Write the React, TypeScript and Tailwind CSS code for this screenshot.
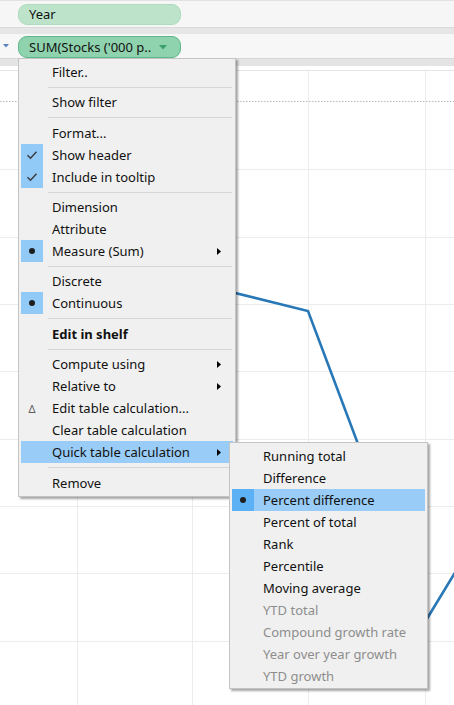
import React from "react";

type Icon = "check" | "bullet" | "delta";
type Item =
  | { sep: true; h?: 8 | 9 }
  | {
      sep?: false;
      label: string;
      icon?: Icon;
      arrow?: boolean;
      bold?: boolean;
      disabled?: boolean;
      hl?: boolean;
    };

const mainItems: Item[] = [
  { label: "Filter.." },
  { sep: true, h: 8 },
  { label: "Show filter" },
  { sep: true, h: 9 },
  { label: "Format..." },
  { label: "Show header", icon: "check" },
  { label: "Include in tooltip", icon: "check" },
  { sep: true, h: 8 },
  { label: "Dimension" },
  { label: "Attribute" },
  { label: "Measure (Sum)", icon: "bullet", arrow: true },
  { sep: true, h: 8 },
  { label: "Discrete" },
  { label: "Continuous", icon: "bullet" },
  { sep: true, h: 9 },
  { label: "Edit in shelf", bold: true },
  { sep: true, h: 8 },
  { label: "Compute using", arrow: true },
  { label: "Relative to", arrow: true },
  { label: "Edit table calculation...", icon: "delta" },
  { label: "Clear table calculation" },
  { label: "Quick table calculation", arrow: true, hl: true },
  { sep: true, h: 9 },
  { label: "Remove" },
];

const subItems: Item[] = [
  { label: "Running total" },
  { label: "Difference" },
  { label: "Percent difference", icon: "bullet", hl: true },
  { label: "Percent of total" },
  { label: "Rank" },
  { label: "Percentile" },
  { label: "Moving average" },
  { label: "YTD total", disabled: true },
  { label: "Compound growth rate", disabled: true },
  { label: "Year over year growth", disabled: true },
  { label: "YTD growth", disabled: true },
];

function IconGlyph({ icon }: { icon?: Icon }) {
  if (icon === "check")
    return (
      <svg width="12" height="10" viewBox="0 0 12 10">
        <path d="M1.5 5.2 L4.5 8.2 L10.5 1.8" fill="none" stroke="#3a3a3a" strokeWidth="1.4" />
      </svg>
    );
  if (icon === "bullet") return <div className="h-[6px] w-[6px] rounded-full bg-[#1e1e1e]" />;
  if (icon === "delta")
    return <span className="text-[11px] leading-none text-[#5a5a5a]">Δ</span>;
  return null;
}

function Arrow() {
  return (
    <svg width="4" height="7" viewBox="0 0 4 7" className="mr-[12px] shrink-0">
      <polygon points="0,0 4,3.5 0,7" fill="#000" />
    </svg>
  );
}

function MenuRows({ items }: { items: Item[] }) {
  return (
    <>
      {items.map((it, i) => {
        if (it.sep)
          return (
            <div
              key={i}
              className={`flex items-center ${it.h === 9 ? "h-[9px]" : "h-[8px]"} ml-[29px] mr-[3px]`}
            >
              <div className="h-px w-full bg-[#d6d6d6]" />
            </div>
          );
        const boxed = it.icon === "check" || it.icon === "bullet";
        return (
          <div
            key={i}
            className={`mx-[2px] flex h-[22px] items-center ${it.hl ? "bg-[#99ccf6]" : ""}`}
          >
            <div
              className={`flex h-[22px] w-[22px] shrink-0 items-center justify-center ${
                boxed ? (it.hl ? "bg-[#5cb0f4]" : "bg-[#91c9f7]") : ""
              }`}
            >
              <IconGlyph icon={it.icon} />
            </div>
            <span
              className={`ml-[9px] flex-1 whitespace-nowrap leading-none ${
                it.bold ? "font-bold" : ""
              } ${it.disabled ? "text-[#8d8d8d]" : "text-[#111]"}`}
            >
              {it.label}
            </span>
            {it.arrow ? <Arrow /> : null}
          </div>
        );
      })}
    </>
  );
}

function Chart() {
  const hLines = [169, 237, 304, 371, 439, 506, 573, 641];
  const vLines = [77, 192, 308, 425];
  return (
    <svg width="454" height="639" viewBox="0 66 454 639" className="block">
      <rect x="0" y="66" width="454" height="639" fill="#fff" />
      <line x1="0" x2="454" y1="70.5" y2="70.5" stroke="#e4e4e4" strokeWidth="1" />
      {hLines.map((y) => (
        <line key={y} x1="0" x2="454" y1={y + 0.5} y2={y + 0.5} stroke="#ececec" strokeWidth="1" />
      ))}
      {vLines.map((x) => (
        <line key={x} x1={x + 0.5} x2={x + 0.5} y1="71" y2="705" stroke="#ececec" strokeWidth="1" />
      ))}
      <line
        x1="0"
        x2="454"
        y1="101.5"
        y2="101.5"
        stroke="#b8b8b8"
        strokeWidth="1"
        strokeDasharray="1.5 1.5"
      />
      <polyline
        points="150,272 308,311 425,622 470,548"
        fill="none"
        stroke="#2877b6"
        strokeWidth="2.6"
        strokeLinejoin="miter"
      />
    </svg>
  );
}

export default function App() {
  return (
    <div className="relative h-[705px] w-[454px] overflow-hidden bg-white font-['Noto_Sans',sans-serif] text-[13px] text-[#111]">
      {/* Shelf row 1 */}
      <div className="flex h-[27px] items-start border-t border-[#e2e2e2] bg-[#f6f6f6]">
        <div className="ml-[18px] mt-[3px] flex h-[21px] w-[163px] items-center rounded-[9px] border border-[#acdcbd] bg-[#bde3cb] pl-[10px] leading-none">
          Year
        </div>
      </div>
      <div className="h-[7px] border-t border-[#dadada] bg-[#e6e6e6]" />
      {/* Shelf row 2 */}
      <div className="flex h-[24px] items-start bg-[#f7f7f7]">
        <div className="flex h-[24px] w-[18px] items-center pl-[3px]">
          <svg width="6" height="4" viewBox="0 0 6 4">
            <polygon points="0,0 6,0 3,3.5" fill="#5a84bf" />
          </svg>
        </div>
        <div className="mt-[2px] flex h-[22px] w-[163px] items-center rounded-[9px] border border-[#5db98a] bg-[#8fd2ae] pl-[10px] leading-none">
          <span className="flex-1 whitespace-nowrap">SUM(Stocks ('000 p..</span>
          <svg width="8" height="5" viewBox="0 0 8 5" className="mr-[13px]">
            <polygon points="0,0 8,0 4,4.5" fill="#3b9f6c" />
          </svg>
        </div>
      </div>
      <div className="h-[8px] border-t border-[#d8d8d8] bg-[#e4e4e4]" />
      <Chart />

      {/* Main context menu */}
      <div className="absolute left-[18px] top-[58px] w-[218px] border border-[#c4c4c4] bg-[#f0f0f0] pb-[2px] pt-[2px] shadow-[2px_2px_2px_rgba(0,0,0,0.35)]">
        <MenuRows items={mainItems} />
      </div>

      {/* Submenu */}
      <div className="absolute left-[229px] top-[442px] w-[199px] border border-[#c4c4c4] bg-[#f0f0f0] pb-[1px] pt-[2px] shadow-[2px_2px_2px_rgba(0,0,0,0.35)]">
        <MenuRows items={subItems} />
      </div>
    </div>
  );
}
